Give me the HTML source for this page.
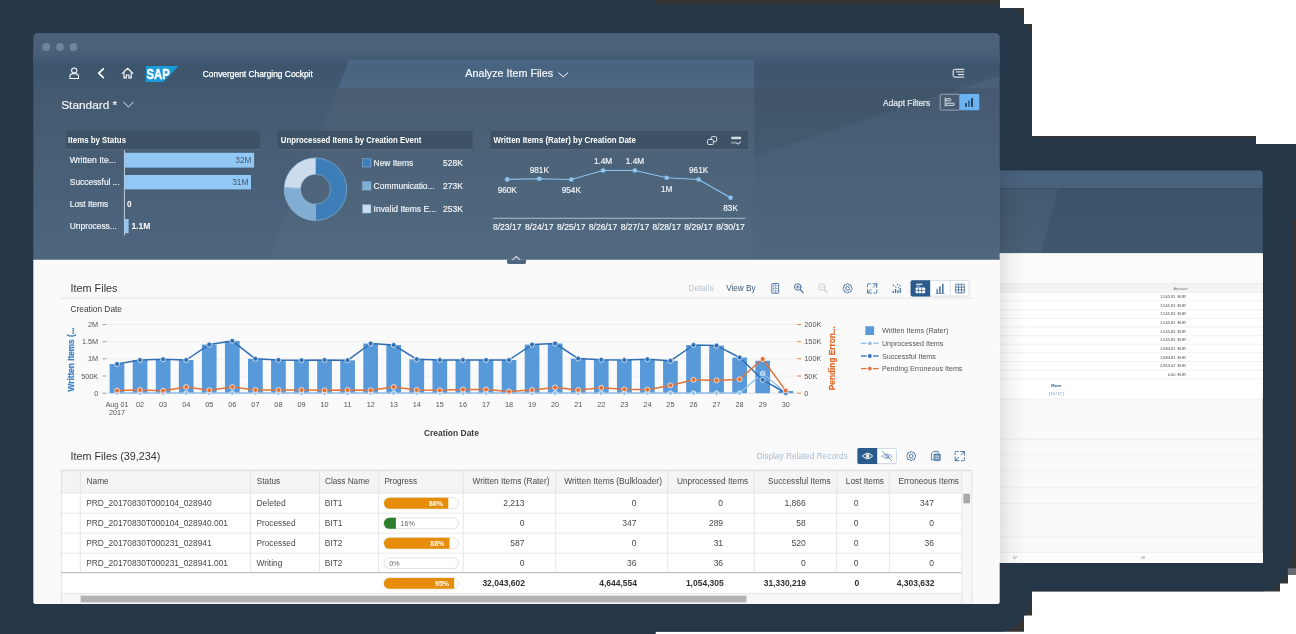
<!DOCTYPE html>
<html><head><meta charset="utf-8"><title>Analyze Item Files</title>
<style>html,body{margin:0;padding:0;background:#fff;}body{width:1296px;height:634px;overflow:hidden;position:relative;}svg{display:block;position:absolute;left:-8px;top:-8px;font-family:"Liberation Sans", sans-serif;filter:blur(0.35px);}text{white-space:pre;}</style>
</head><body>
<svg width="1312" height="650" viewBox="-8 -8 1312 650" font-family='"Liberation Sans", sans-serif'>
<defs>
<clipPath id="mask"><polygon points="-10,-10 1000,-10 1000,8 1024,8 1024,24 1032,24 1032,136 1256,136 1256,144 1310,144 1310,575 1288,575 1288,583.5 1280,583.5 1280,591.5 1032,591.5 1032,615.5 1024,615.5 1024,631.8 655.5,631.8 655.5,650 -10,650"/></clipPath>
<clipPath id="win1"><path d="M37.8 33 H995.2 A4.5 4.5 0 0 1 999.7 37.5 V601.9 A2 2 0 0 1 997.7 603.9 H35.3 A2 2 0 0 1 33.3 601.9 V37.5 A4.5 4.5 0 0 1 37.8 33 Z"/></clipPath>
<clipPath id="win2"><path d="M990 170.6 H1259.3 A3.5 3.5 0 0 1 1262.8 174.1 V562.9 H990 Z"/></clipPath>
<linearGradient id="gfilter" x1="0" y1="0" x2="0" y2="1"><stop offset="0" stop-color="#43596f"/><stop offset="1" stop-color="#4d667e"/></linearGradient>
<linearGradient id="gshell" x1="0" y1="0" x2="0" y2="1"><stop offset="0" stop-color="#3c556d"/><stop offset="1" stop-color="#405971"/></linearGradient>
<linearGradient id="gw2" x1="0" y1="0" x2="0" y2="1"><stop offset="0" stop-color="#3b5269"/><stop offset="1" stop-color="#40586f"/></linearGradient>
<linearGradient id="gtopgray" x1="0" y1="0" x2="0" y2="1"><stop offset="0" stop-color="#343434"/><stop offset="0.6" stop-color="#343434"/><stop offset="1" stop-color="#243648"/></linearGradient>
<linearGradient id="gtitlefade" x1="0" y1="0" x2="0" y2="1"><stop offset="0" stop-color="#4b617a"/><stop offset="1" stop-color="#3d566e"/></linearGradient>
<linearGradient id="gfade" x1="0" y1="0" x2="1" y2="0"><stop offset="0" stop-color="#000" stop-opacity="0.10"/><stop offset="0.4" stop-color="#000" stop-opacity="0.04"/><stop offset="1" stop-color="#000" stop-opacity="0"/></linearGradient>
</defs>
<rect x="-10.00" y="-10.00" width="1330.00" height="670.00" fill="#ffffff" />
<g clip-path="url(#mask)">
<rect x="-10.00" y="-10.00" width="1330.00" height="670.00" fill="#343434" />
<rect x="-10.00" y="-10.00" width="666.00" height="670.00" fill="#243648" />
<rect x="-60" y="4.5" width="1092" height="627.2" rx="32" ry="41.5" fill="#243648"/>
<path d="M990 138 H1320 V219 H1292.6 V550 A31 41.5 0 0 1 1261.6 591.5 H990 Z" fill="#243648"/>
<rect x="1287.80" y="568.20" width="30.00" height="7.00" fill="#666a72" />
</g>
<g clip-path="url(#win2)">
<rect x="990.00" y="170.00" width="280.00" height="18.40" fill="#49627b" />
<rect x="990.00" y="188.40" width="280.00" height="64.90" fill="url(#gw2)" />
<polygon points="990,188.4 1058.5,188.4 1040.8,253.3 990,253.3" fill="#ffffff" opacity="0.045"/>
<rect x="990.00" y="253.30" width="280.00" height="320.00" fill="#fafafa" />
<rect x="990.00" y="253.30" width="280.00" height="30.30" fill="#fbfbfb" />
<rect x="990.00" y="283.60" width="280.00" height="9.10" fill="#f4f4f4" />
<line x1="990.00" y1="283.60" x2="1270.00" y2="283.60" stroke="#e4e4e4" stroke-width="0.6" />
<line x1="990.00" y1="292.70" x2="1270.00" y2="292.70" stroke="#e4e4e4" stroke-width="0.6" />
<rect x="990.00" y="292.70" width="280.00" height="106.00" fill="#ffffff" />
<text x="1180.5" y="289.70" font-size="4.2" fill="#777" font-weight="normal" text-anchor="middle" >Amount</text>
<text x="1175.5" y="298.23" font-size="4.0" fill="#444" font-weight="normal" text-anchor="end" >1,545.81</text>
<text x="1177.5" y="298.23" font-size="4.0" fill="#444" font-weight="normal" text-anchor="start" >EUR</text>
<line x1="990.00" y1="301.10" x2="1270.00" y2="301.10" stroke="#e9e9e9" stroke-width="0.6" />
<text x="1175.5" y="306.86" font-size="4.0" fill="#444" font-weight="normal" text-anchor="end" >1,545.81</text>
<text x="1177.5" y="306.86" font-size="4.0" fill="#444" font-weight="normal" text-anchor="start" >EUR</text>
<line x1="990.00" y1="309.73" x2="1270.00" y2="309.73" stroke="#e9e9e9" stroke-width="0.6" />
<text x="1175.5" y="315.49" font-size="4.0" fill="#444" font-weight="normal" text-anchor="end" >1,545.81</text>
<text x="1177.5" y="315.49" font-size="4.0" fill="#444" font-weight="normal" text-anchor="start" >EUR</text>
<line x1="990.00" y1="318.36" x2="1270.00" y2="318.36" stroke="#e9e9e9" stroke-width="0.6" />
<text x="1175.5" y="324.12" font-size="4.0" fill="#444" font-weight="normal" text-anchor="end" >1,545.81</text>
<text x="1177.5" y="324.12" font-size="4.0" fill="#444" font-weight="normal" text-anchor="start" >EUR</text>
<line x1="990.00" y1="326.99" x2="1270.00" y2="326.99" stroke="#e9e9e9" stroke-width="0.6" />
<text x="1175.5" y="332.75" font-size="4.0" fill="#444" font-weight="normal" text-anchor="end" >1,545.81</text>
<text x="1177.5" y="332.75" font-size="4.0" fill="#444" font-weight="normal" text-anchor="start" >EUR</text>
<line x1="990.00" y1="335.62" x2="1270.00" y2="335.62" stroke="#e9e9e9" stroke-width="0.6" />
<text x="1175.5" y="341.38" font-size="4.0" fill="#444" font-weight="normal" text-anchor="end" >1,545.81</text>
<text x="1177.5" y="341.38" font-size="4.0" fill="#444" font-weight="normal" text-anchor="start" >EUR</text>
<line x1="990.00" y1="344.25" x2="1270.00" y2="344.25" stroke="#e9e9e9" stroke-width="0.6" />
<text x="1175.5" y="350.01" font-size="4.0" fill="#444" font-weight="normal" text-anchor="end" >1,684.81</text>
<text x="1177.5" y="350.01" font-size="4.0" fill="#444" font-weight="normal" text-anchor="start" >EUR</text>
<line x1="990.00" y1="352.88" x2="1270.00" y2="352.88" stroke="#e9e9e9" stroke-width="0.6" />
<text x="1175.5" y="358.64" font-size="4.0" fill="#444" font-weight="normal" text-anchor="end" >1,684.81</text>
<text x="1177.5" y="358.64" font-size="4.0" fill="#444" font-weight="normal" text-anchor="start" >EUR</text>
<line x1="990.00" y1="361.51" x2="1270.00" y2="361.51" stroke="#e9e9e9" stroke-width="0.6" />
<text x="1175.5" y="367.27" font-size="4.0" fill="#444" font-weight="normal" text-anchor="end" >2,853.62</text>
<text x="1177.5" y="367.27" font-size="4.0" fill="#444" font-weight="normal" text-anchor="start" >EUR</text>
<line x1="990.00" y1="370.14" x2="1270.00" y2="370.14" stroke="#e9e9e9" stroke-width="0.6" />
<text x="1175.5" y="375.90" font-size="4.0" fill="#444" font-weight="normal" text-anchor="end" >0.00</text>
<text x="1177.5" y="375.90" font-size="4.0" fill="#444" font-weight="normal" text-anchor="start" >EUR</text>
<line x1="990.00" y1="378.77" x2="1270.00" y2="378.77" stroke="#e9e9e9" stroke-width="0.6" />
<text x="1056.3" y="386.78" font-size="4.4" fill="#2f5f8f" font-weight="bold" text-anchor="middle" >More</text>
<text x="1056.3" y="394.69" font-size="3.6" fill="#5b84ad" font-weight="normal" text-anchor="middle" >[ 10 / 17 ]</text>
<line x1="990.00" y1="398.90" x2="1270.00" y2="398.90" stroke="#efefef" stroke-width="0.7" />
<line x1="990.00" y1="439.10" x2="1270.00" y2="439.10" stroke="#eaeaea" stroke-width="0.8" />
<line x1="990.00" y1="454.70" x2="1270.00" y2="454.70" stroke="#eeeeee" stroke-width="0.8" />
<line x1="990.00" y1="470.60" x2="1270.00" y2="470.60" stroke="#ececec" stroke-width="0.8" />
<line x1="990.00" y1="487.40" x2="1270.00" y2="487.40" stroke="#f0f0f0" stroke-width="0.8" />
<line x1="990.00" y1="503.50" x2="1270.00" y2="503.50" stroke="#f0f0f0" stroke-width="0.8" />
<line x1="990.00" y1="520.00" x2="1270.00" y2="520.00" stroke="#f3f3f3" stroke-width="0.8" />
<line x1="990.00" y1="536.70" x2="1270.00" y2="536.70" stroke="#f0f0f0" stroke-width="0.8" />
<line x1="990.00" y1="552.40" x2="1270.00" y2="552.40" stroke="#e8e8e8" stroke-width="0.8" />
<rect x="990.00" y="552.80" width="280.00" height="12.00" fill="#fdfdfd" />
<text x="1015.0" y="559.15" font-size="3.2" fill="#777" font-weight="normal" text-anchor="middle" >07</text>
<text x="1143.0" y="559.15" font-size="3.2" fill="#777" font-weight="normal" text-anchor="middle" >08</text>
<rect x="999.70" y="170.00" width="27.00" height="400.00" fill="url(#gfade)" />
</g>
<g clip-path="url(#win1)">
<rect x="33.00" y="33.00" width="968.00" height="30.00" fill="#4b617a" />
<rect x="33.00" y="60.00" width="968.00" height="28.00" fill="url(#gshell)" />
<rect x="33.00" y="88.00" width="968.00" height="172.00" fill="url(#gfilter)" />
<rect x="33.00" y="51.00" width="968.00" height="14.00" fill="url(#gtitlefade)" />
<polygon points="349,60 753.8,60 753.8,88 338,88" fill="#8fc0ee" opacity="0.14"/>
<polygon points="338,88 753.8,88 753.8,260 268,260" fill="#ffffff" opacity="0.028"/>
<polygon points="753.8,156.2 1000,75.4 1000,260 753.8,260" fill="#ffffff" opacity="0.012"/>
<polygon points="961.7,88 1000,75.4 1000,88" fill="#ffffff" opacity="0.045"/>
<polygon points="753.8,88 961.7,88 753.8,156.2" fill="#000000" opacity="0.04"/>
<rect x="33.00" y="258.90" width="968.00" height="1.00" fill="#3e546b" opacity="0.6"/>
<rect x="33.00" y="259.70" width="968.00" height="345.00" fill="#fafafa" />
</g>
<circle cx="46.3" cy="46.9" r="3.9" fill="#6f859d"/>
<circle cx="60.0" cy="46.9" r="3.9" fill="#6f859d"/>
<circle cx="73.4" cy="46.9" r="3.9" fill="#6f859d"/>
<g fill="none" stroke="#ffffff" stroke-width="1.05" stroke-linejoin="round"><circle cx="74.2" cy="70.5" r="2.6"/><path d="M69.9 78.5 V76.6 A2.8 2.8 0 0 1 72.7 73.8 H75.7 A2.8 2.8 0 0 1 78.5 76.6 V78.5 Z"/></g>
<path d="M103.4 68.8 L98.7 73.2 L103.4 77.6" fill="none" stroke="#ffffff" stroke-width="1.7" stroke-linecap="round" stroke-linejoin="round"/>
<g fill="none" stroke="#ffffff" stroke-width="1.1" stroke-linejoin="round" stroke-linecap="round"><path d="M122.3 73.3 L127.6 68.4 L132.9 73.3"/><path d="M124 72.6 V77.9 H126.3 V75 H128.9 V77.9 H131.2 V72.6"/><path d="M124.3 71.3 L127.6 68.3 L130.9 71.3" stroke-width="0.9"/></g>
<polygon points="145.9,65.9 178.6,65.9 163.2,81.9 145.9,81.9" fill="#1b9ad8"/>
<text x="146.5" y="79.43" font-size="14.6" fill="#ffffff" font-weight="bold" text-anchor="start" textLength="23.2" lengthAdjust="spacingAndGlyphs" stroke="#fff" stroke-width="0.45">SAP</text>
<text x="202.8" y="76.64" font-size="8.2" fill="#ffffff" font-weight="normal" text-anchor="start" textLength="110.0" lengthAdjust="spacingAndGlyphs" stroke="#fff" stroke-width="0.25">Convergent Charging Cockpit</text>
<text x="465.3" y="76.72" font-size="10.4" fill="#f4f7fa" font-weight="normal" text-anchor="start" textLength="87.8" lengthAdjust="spacingAndGlyphs" stroke="#f4f7fa" stroke-width="0.2">Analyze Item Files</text>
<path d="M558.8 72.9 L563.3 76.8 L567.8 72.9" fill="none" stroke="#ffffff" stroke-width="1.0" stroke-linecap="round" stroke-linejoin="round"/>
<g fill="none" stroke="#ffffff" stroke-width="1.0" stroke-linecap="round"><path d="M963.8 69.3 H954.8 A1.6 1.6 0 0 0 953.2 70.9 V75.5 A1.6 1.6 0 0 0 954.8 77.1 H963.8"/><path d="M956.4 71.9 H963.8 M958.4 74.5 H963.8" stroke-width="0.9"/></g>
<text x="61.2" y="108.61" font-size="11.2" fill="#eef2f6" font-weight="normal" text-anchor="start" textLength="56.0" lengthAdjust="spacingAndGlyphs" stroke="#eef2f6" stroke-width="0.2">Standard *</text>
<path d="M123.6 102.3 L128.4 106.9 L133.2 102.3" fill="none" stroke="#e3e9ef" stroke-width="1.0" stroke-linecap="round" stroke-linejoin="round"/>
<text x="883.1" y="105.67" font-size="8.3" fill="#e6ebf1" font-weight="normal" text-anchor="start" textLength="47.0" lengthAdjust="spacingAndGlyphs" stroke="#e6ebf1" stroke-width="0.2">Adapt Filters</text>
<rect x="940.20" y="94.30" width="19.60" height="15.80" fill="none" rx="1.2" stroke="#b7c6d6" stroke-width="0.7"/>
<rect x="959.80" y="94.00" width="19.50" height="16.30" fill="#6cb4f1" rx="1.2" />
<g fill="none" stroke="#e8eef4" stroke-width="0.9"><rect x="946.2" y="98.7" width="4.5" height="2.2" rx="0.5"/><rect x="946.2" y="103.2" width="8" height="2.2" rx="0.5"/><path d="M945.2 97.6 V106.6"/></g>
<g fill="#23405c"><rect x="965.1" y="103.1" width="1.7" height="3.8"/><rect x="968.1" y="100.7" width="1.7" height="6.2" opacity="0.75"/><rect x="971.1" y="98.1" width="1.9" height="8.8"/></g>
<rect x="66.20" y="130.80" width="193.80" height="18.40" fill="#3e5266" />
<line x1="66.20" y1="149.60" x2="260.00" y2="149.60" stroke="#5a7089" stroke-width="0.7" />
<text x="68.0" y="143.34" font-size="8.5" fill="#ffffff" font-weight="bold" text-anchor="start" textLength="58.0" lengthAdjust="spacingAndGlyphs" >Items by Status</text>
<line x1="124.40" y1="150.00" x2="124.40" y2="235.50" stroke="#cfd9e3" stroke-width="0.9" />
<rect x="124.70" y="152.80" width="129.40" height="14.80" fill="#91c8f6" />
<text x="251.5" y="163.37" font-size="8.3" fill="#45566b" font-weight="normal" text-anchor="end" >32M</text>
<rect x="124.70" y="175.00" width="126.30" height="14.40" fill="#91c8f6" />
<text x="248.4" y="185.37" font-size="8.3" fill="#45566b" font-weight="normal" text-anchor="end" >31M</text>
<rect x="124.70" y="219.00" width="3.90" height="14.20" fill="#91c8f6" />
<text x="69.8" y="163.34" font-size="8.2" fill="#f2f5f8" font-weight="normal" text-anchor="start" textLength="46.0" lengthAdjust="spacingAndGlyphs"  stroke="#f2f5f8" stroke-width="0.18">Written Ite...</text>
<text x="69.8" y="185.14" font-size="8.2" fill="#f2f5f8" font-weight="normal" text-anchor="start" textLength="50.0" lengthAdjust="spacingAndGlyphs"  stroke="#f2f5f8" stroke-width="0.18">Successful ...</text>
<text x="69.8" y="207.04" font-size="8.2" fill="#f2f5f8" font-weight="normal" text-anchor="start" textLength="38.5" lengthAdjust="spacingAndGlyphs"  stroke="#f2f5f8" stroke-width="0.18">Lost Items</text>
<text x="69.8" y="229.04" font-size="8.2" fill="#f2f5f8" font-weight="normal" text-anchor="start" textLength="47.0" lengthAdjust="spacingAndGlyphs"  stroke="#f2f5f8" stroke-width="0.18">Unprocess...</text>
<text x="127.0" y="207.04" font-size="8.2" fill="#ffffff" font-weight="bold" text-anchor="start" >0</text>
<text x="131.4" y="229.04" font-size="8.2" fill="#ffffff" font-weight="bold" text-anchor="start" textLength="18.8" lengthAdjust="spacingAndGlyphs" >1.1M</text>
<rect x="277.80" y="130.80" width="194.90" height="18.40" fill="#3e5266" />
<line x1="277.80" y1="149.60" x2="472.70" y2="149.60" stroke="#5a7089" stroke-width="0.7" />
<text x="280.8" y="143.34" font-size="8.5" fill="#ffffff" font-weight="bold" text-anchor="start" textLength="140.5" lengthAdjust="spacingAndGlyphs" >Unprocessed Items by Creation Event</text>
<path d="M315.50 157.90 A31.3 31.3 0 1 1 315.34 220.50 L315.42 204.20 A15.0 15.0 0 1 0 315.50 174.20 Z" fill="#3d7eb8" stroke="#9cc4e6" stroke-width="0.5"/>
<path d="M315.34 220.50 A31.3 31.3 0 0 1 284.26 187.29 L300.53 188.28 A15.0 15.0 0 0 0 315.42 204.20 Z" fill="#82add3" stroke="#9cc4e6" stroke-width="0.5"/>
<path d="M284.26 187.29 A31.3 31.3 0 0 1 315.50 157.90 L315.50 174.20 A15.0 15.0 0 0 0 300.53 188.28 Z" fill="#cddcec" stroke="#9cc4e6" stroke-width="0.5"/>
<rect x="362.70" y="158.80" width="8.20" height="8.20" fill="#3d7eb8" stroke="#8fc0ee" stroke-width="0.5"/>
<text x="373.6" y="166.04" font-size="8.2" fill="#f2f5f8" font-weight="normal" text-anchor="start" textLength="39.5" lengthAdjust="spacingAndGlyphs"  stroke="#f2f5f8" stroke-width="0.18">New Items</text>
<text x="443.0" y="166.04" font-size="8.2" fill="#f2f5f8" font-weight="normal" text-anchor="start" textLength="19.8" lengthAdjust="spacingAndGlyphs"  stroke="#f2f5f8" stroke-width="0.18">528K</text>
<rect x="362.70" y="181.80" width="8.20" height="8.20" fill="#82add3" stroke="#8fc0ee" stroke-width="0.5"/>
<text x="373.6" y="189.04" font-size="8.2" fill="#f2f5f8" font-weight="normal" text-anchor="start" textLength="61.0" lengthAdjust="spacingAndGlyphs"  stroke="#f2f5f8" stroke-width="0.18">Communicatio...</text>
<text x="443.0" y="189.04" font-size="8.2" fill="#f2f5f8" font-weight="normal" text-anchor="start" textLength="19.8" lengthAdjust="spacingAndGlyphs"  stroke="#f2f5f8" stroke-width="0.18">273K</text>
<rect x="362.70" y="204.80" width="8.20" height="8.20" fill="#cddcec" stroke="#8fc0ee" stroke-width="0.5"/>
<text x="373.6" y="212.04" font-size="8.2" fill="#f2f5f8" font-weight="normal" text-anchor="start" textLength="62.5" lengthAdjust="spacingAndGlyphs"  stroke="#f2f5f8" stroke-width="0.18">Invalid Items E...</text>
<text x="443.0" y="212.04" font-size="8.2" fill="#f2f5f8" font-weight="normal" text-anchor="start" textLength="19.8" lengthAdjust="spacingAndGlyphs"  stroke="#f2f5f8" stroke-width="0.18">253K</text>
<rect x="490.80" y="130.80" width="257.10" height="18.40" fill="#3e5266" />
<line x1="490.80" y1="149.60" x2="747.90" y2="149.60" stroke="#5a7089" stroke-width="0.7" />
<text x="493.4" y="143.34" font-size="8.5" fill="#ffffff" font-weight="bold" text-anchor="start" textLength="142.5" lengthAdjust="spacingAndGlyphs" >Written Items (Rater) by Creation Date</text>
<g fill="none" stroke="#d9e1e9" stroke-width="1.0"><rect x="707.5" y="139.5" width="5.9" height="5.0" rx="1"/><path d="M711.2 139.2 V137.6 A1 1 0 0 1 712.2 136.6 H715.6 A1 1 0 0 1 716.6 137.6 V140.6 A1 1 0 0 1 715.6 141.6 H713.8"/></g>
<g fill="#d3dbe3"><rect x="731.3" y="136.7" width="9.8" height="2.5"/><rect x="731.3" y="141.8" width="5.0" height="1.8" opacity="0.5"/><path d="M736.6 142.3 L738.3 143.4 L740.4 141.2 L741.2 141.9 L738.4 144.8 L736.0 143.2 Z"/></g>
<polyline points="507.2,179.4 539.3,178.8 571.3,179.5 603.1,170.5 634.9,170.5 666.7,177.7 698.6,179.5 730.6,197.8" fill="none" stroke="#8dc3f2" stroke-width="1.1" stroke-linejoin="round"/>
<circle cx="507.2" cy="179.4" r="2.3" fill="#8dc3f2"/>
<circle cx="539.3" cy="178.8" r="2.3" fill="#8dc3f2"/>
<circle cx="571.3" cy="179.5" r="2.3" fill="#8dc3f2"/>
<circle cx="603.1" cy="170.5" r="2.3" fill="#8dc3f2"/>
<circle cx="634.9" cy="170.5" r="2.3" fill="#8dc3f2"/>
<circle cx="666.7" cy="177.7" r="2.3" fill="#8dc3f2"/>
<circle cx="698.6" cy="179.5" r="2.3" fill="#8dc3f2"/>
<circle cx="730.6" cy="197.8" r="2.3" fill="#8dc3f2"/>
<text x="507.2" y="192.84" font-size="8.2" fill="#f2f5f8" font-weight="normal" text-anchor="middle"  stroke="#f2f5f8" stroke-width="0.18">960K</text>
<text x="539.3" y="172.64" font-size="8.2" fill="#f2f5f8" font-weight="normal" text-anchor="middle"  stroke="#f2f5f8" stroke-width="0.18">981K</text>
<text x="571.3" y="192.84" font-size="8.2" fill="#f2f5f8" font-weight="normal" text-anchor="middle"  stroke="#f2f5f8" stroke-width="0.18">954K</text>
<text x="603.1" y="164.14" font-size="8.2" fill="#f2f5f8" font-weight="normal" text-anchor="middle"  stroke="#f2f5f8" stroke-width="0.18">1.4M</text>
<text x="634.9" y="164.14" font-size="8.2" fill="#f2f5f8" font-weight="normal" text-anchor="middle"  stroke="#f2f5f8" stroke-width="0.18">1.4M</text>
<text x="666.7" y="192.14" font-size="8.2" fill="#f2f5f8" font-weight="normal" text-anchor="middle"  stroke="#f2f5f8" stroke-width="0.18">1M</text>
<text x="698.6" y="172.64" font-size="8.2" fill="#f2f5f8" font-weight="normal" text-anchor="middle"  stroke="#f2f5f8" stroke-width="0.18">961K</text>
<text x="730.6" y="210.94" font-size="8.2" fill="#f2f5f8" font-weight="normal" text-anchor="middle"  stroke="#f2f5f8" stroke-width="0.18">83K</text>
<line x1="493.00" y1="218.30" x2="745.20" y2="218.30" stroke="#b9c6d3" stroke-width="0.9" />
<text x="507.2" y="230.14" font-size="8.2" fill="#f2f5f8" font-weight="normal" text-anchor="middle" textLength="28.5" lengthAdjust="spacingAndGlyphs"  stroke="#f2f5f8" stroke-width="0.18">8/23/17</text>
<text x="539.3" y="230.14" font-size="8.2" fill="#f2f5f8" font-weight="normal" text-anchor="middle" textLength="28.5" lengthAdjust="spacingAndGlyphs"  stroke="#f2f5f8" stroke-width="0.18">8/24/17</text>
<text x="571.3" y="230.14" font-size="8.2" fill="#f2f5f8" font-weight="normal" text-anchor="middle" textLength="28.5" lengthAdjust="spacingAndGlyphs"  stroke="#f2f5f8" stroke-width="0.18">8/25/17</text>
<text x="603.1" y="230.14" font-size="8.2" fill="#f2f5f8" font-weight="normal" text-anchor="middle" textLength="28.5" lengthAdjust="spacingAndGlyphs"  stroke="#f2f5f8" stroke-width="0.18">8/26/17</text>
<text x="634.9" y="230.14" font-size="8.2" fill="#f2f5f8" font-weight="normal" text-anchor="middle" textLength="28.5" lengthAdjust="spacingAndGlyphs"  stroke="#f2f5f8" stroke-width="0.18">8/27/17</text>
<text x="666.7" y="230.14" font-size="8.2" fill="#f2f5f8" font-weight="normal" text-anchor="middle" textLength="28.5" lengthAdjust="spacingAndGlyphs"  stroke="#f2f5f8" stroke-width="0.18">8/28/17</text>
<text x="698.6" y="230.14" font-size="8.2" fill="#f2f5f8" font-weight="normal" text-anchor="middle" textLength="28.5" lengthAdjust="spacingAndGlyphs"  stroke="#f2f5f8" stroke-width="0.18">8/29/17</text>
<text x="730.6" y="230.14" font-size="8.2" fill="#f2f5f8" font-weight="normal" text-anchor="middle" textLength="28.5" lengthAdjust="spacingAndGlyphs"  stroke="#f2f5f8" stroke-width="0.18">8/30/17</text>
<path d="M507 259.6 H526 V262.2 A1.7 1.7 0 0 1 524.3 263.9 H508.7 A1.7 1.7 0 0 1 507 262.2 Z" fill="#4d657e"/>
<path d="M512.7 259.7 L516.3 256.4 L519.9 259.7" fill="none" stroke="#c3d0dd" stroke-width="1.2" stroke-linecap="round" stroke-linejoin="round"/>
<text x="70.5" y="292.08" font-size="11.4" fill="#333" font-weight="normal" text-anchor="start" textLength="47.0" lengthAdjust="spacingAndGlyphs" >Item Files</text>
<line x1="61.20" y1="298.10" x2="972.00" y2="298.10" stroke="#e2e2e2" stroke-width="1.0" />
<text x="688.5" y="291.48" font-size="8.6" fill="#b6c3d0" font-weight="normal" text-anchor="start" textLength="25.0" lengthAdjust="spacingAndGlyphs" >Details</text>
<text x="726.2" y="291.48" font-size="8.6" fill="#3f5877" font-weight="normal" text-anchor="start" textLength="29.4" lengthAdjust="spacingAndGlyphs" >View By</text>
<g fill="none" stroke="#3d6a9c" stroke-width="0.9"><rect x="771.8" y="283.6" width="6.9" height="9.6" rx="0.6"/><path d="M775.2 283.6 V293.2" stroke-width="0.6"/><path d="M773 286 H774.2 M773 288.4 H774.2 M773 290.8 H774.2 M776.2 286 H777.4 M776.2 288.4 H777.4 M776.2 290.8 H777.4" stroke-width="0.8"/></g>
<g fill="none" stroke="#3d6a9c" stroke-width="0.9" stroke-linecap="round"><circle cx="797.7" cy="287.0" r="3.3"/><path d="M800.2 289.6 L803.1 292.6" stroke-width="1.3"/><path d="M796.0 287.0 H799.4 M797.7 285.3 V288.7" stroke-width="0.8"/></g>
<g fill="none" stroke="#c3ccd6" stroke-width="0.9" stroke-linecap="round"><circle cx="821.9" cy="287.0" r="3.3"/><path d="M824.4 289.6 L827.3 292.6" stroke-width="1.3"/><path d="M820.2 287.0 H823.6" stroke-width="0.8"/></g>
<g fill="none" stroke="#3d6a9c" stroke-width="0.9" stroke-linejoin="round"><path d="M852.30 288.40 L851.20 289.89 L850.92 291.72 L849.09 292.00 L847.60 293.10 L846.11 292.00 L844.28 291.72 L844.00 289.89 L842.90 288.40 L844.00 286.91 L844.28 285.08 L846.11 284.80 L847.60 283.70 L849.09 284.80 L850.92 285.08 L851.20 286.91 Z"/><circle cx="847.6" cy="288.4" r="1.9"/></g>
<g fill="none" stroke="#3d6a9c" stroke-width="0.9" stroke-linecap="round" stroke-linejoin="round"><path d="M873.0 283.79999999999995 H876.8000000000001 V287.59999999999997 M876.8000000000001 283.79999999999995 L873.4000000000001 287.2"/><path d="M871.4000000000001 293.0 H867.6 V289.2 M867.6 293.0 L871.0 289.59999999999997"/><path d="M867.6 286.79999999999995 V283.79999999999995 H870.6" stroke-dasharray="1.4 1.1"/><path d="M876.8000000000001 290.0 V293.0 H873.8000000000001" stroke-dasharray="1.4 1.1"/></g>
<g fill="#3d6a9c"><rect x="892.6" y="290.6" width="1.2" height="2.4"/><rect x="895" y="289" width="1.2" height="4"/><rect x="897.4" y="290.2" width="1.2" height="2.8"/><rect x="899.6" y="288" width="1.2" height="5"/><circle cx="893.4" cy="285.4" r="0.7"/><circle cx="895.8" cy="287" r="0.7"/><circle cx="897.6" cy="284.4" r="0.7"/><circle cx="900" cy="285.8" r="0.7"/><circle cx="898.6" cy="287.6" r="0.6"/></g>
<rect x="910.80" y="280.50" width="58.40" height="15.60" fill="#ffffff" rx="1.5" stroke="#c9d3dd" stroke-width="0.7"/>
<path d="M912.3 280.2 H930.2 V296.4 H912.3 A1.7 1.7 0 0 1 910.6 294.7 V281.9 A1.7 1.7 0 0 1 912.3 280.2 Z" fill="#2b5a8c"/>
<line x1="950.30" y1="280.50" x2="950.30" y2="296.10" stroke="#c9d3dd" stroke-width="0.7" />
<g fill="#ffffff"><rect x="916.2" y="283.6" width="6.2" height="1.4" opacity="0.8"/><rect x="916.2" y="285.6" width="4" height="1.0" opacity="0.6"/><rect x="915.6" y="287.6" width="9.6" height="5.6" rx="1"/></g>
<g stroke="#2b5a8c" stroke-width="0.7"><path d="M915.6 290.4 H925.2 M918.4 287.6 V293.2 M921.6 287.6 V293.2"/></g>
<g fill="#3d6a9c"><rect x="936.4" y="288.8" width="1.5" height="4.2" opacity="0.8"/><rect x="939.2" y="286.4" width="1.5" height="6.6"/><rect x="942" y="283.8" width="1.6" height="9.2" opacity="0.9"/><rect x="935.6" y="293" width="9" height="0.7"/></g>
<g fill="none" stroke="#3d6a9c" stroke-width="0.8"><rect x="955.6" y="284.2" width="8.8" height="8.6" rx="0.6"/><path d="M958.5 284.2 V292.8 M961.5 284.2 V292.8 M955.6 287.1 H964.4 M955.6 289.9 H964.4"/></g>
<text x="70.5" y="312.01" font-size="8.4" fill="#3b3b3b" font-weight="normal" text-anchor="start" textLength="51.5" lengthAdjust="spacingAndGlyphs" >Creation Date</text>
<line x1="106.50" y1="324.50" x2="797.00" y2="324.50" stroke="#ececec" stroke-width="0.8" />
<line x1="106.50" y1="341.70" x2="797.00" y2="341.70" stroke="#ececec" stroke-width="0.8" />
<line x1="106.50" y1="358.80" x2="797.00" y2="358.80" stroke="#ececec" stroke-width="0.8" />
<line x1="106.50" y1="376.00" x2="797.00" y2="376.00" stroke="#ececec" stroke-width="0.8" />
<line x1="106.50" y1="393.20" x2="797.00" y2="393.20" stroke="#dcdcdc" stroke-width="0.8" />
<text x="98.2" y="327.11" font-size="7.3" fill="#555" font-weight="normal" text-anchor="end" >2M</text>
<line x1="102.60" y1="324.50" x2="106.20" y2="324.50" stroke="#7a7a7a" stroke-width="0.7" />
<text x="98.2" y="344.31" font-size="7.3" fill="#555" font-weight="normal" text-anchor="end" >1.5M</text>
<line x1="102.60" y1="341.70" x2="106.20" y2="341.70" stroke="#7a7a7a" stroke-width="0.7" />
<text x="98.2" y="361.41" font-size="7.3" fill="#555" font-weight="normal" text-anchor="end" >1M</text>
<line x1="102.60" y1="358.80" x2="106.20" y2="358.80" stroke="#7a7a7a" stroke-width="0.7" />
<text x="98.2" y="378.61" font-size="7.3" fill="#555" font-weight="normal" text-anchor="end" >500K</text>
<line x1="102.60" y1="376.00" x2="106.20" y2="376.00" stroke="#7a7a7a" stroke-width="0.7" />
<text x="98.2" y="395.81" font-size="7.3" fill="#555" font-weight="normal" text-anchor="end" >0</text>
<line x1="102.60" y1="393.20" x2="106.20" y2="393.20" stroke="#7a7a7a" stroke-width="0.7" />
<text x="804.3" y="327.11" font-size="7.3" fill="#555" font-weight="normal" text-anchor="start" >200K</text>
<line x1="797.20" y1="324.50" x2="801.20" y2="324.50" stroke="#e0733a" stroke-width="0.9" />
<text x="804.3" y="344.31" font-size="7.3" fill="#555" font-weight="normal" text-anchor="start" >150K</text>
<line x1="797.20" y1="341.70" x2="801.20" y2="341.70" stroke="#e0733a" stroke-width="0.9" />
<text x="804.3" y="361.41" font-size="7.3" fill="#555" font-weight="normal" text-anchor="start" >100K</text>
<line x1="797.20" y1="358.80" x2="801.20" y2="358.80" stroke="#e0733a" stroke-width="0.9" />
<text x="804.3" y="378.61" font-size="7.3" fill="#555" font-weight="normal" text-anchor="start" >50K</text>
<line x1="797.20" y1="376.00" x2="801.20" y2="376.00" stroke="#e0733a" stroke-width="0.9" />
<text x="804.3" y="395.81" font-size="7.3" fill="#555" font-weight="normal" text-anchor="start" >0</text>
<line x1="797.20" y1="393.20" x2="801.20" y2="393.20" stroke="#e0733a" stroke-width="0.9" />
<text transform="translate(74.4 359.4) rotate(-90)" text-anchor="middle" font-size="8.6" font-weight="bold" fill="#3b7fc4" stroke="#3b7fc4" stroke-width="0.25" textLength="64" lengthAdjust="spacingAndGlyphs">Written Items (...</text>
<text transform="translate(835.2 358.2) rotate(-90)" text-anchor="middle" font-size="8.6" font-weight="bold" fill="#e0692a" stroke="#e0692a" stroke-width="0.2" textLength="64" lengthAdjust="spacingAndGlyphs">Pending Erron...</text>
<rect x="109.65" y="364.00" width="14.70" height="29.20" fill="#5899da" />
<rect x="132.71" y="360.00" width="14.70" height="33.20" fill="#5899da" />
<rect x="155.77" y="359.30" width="14.70" height="33.90" fill="#5899da" />
<rect x="178.83" y="360.00" width="14.70" height="33.20" fill="#5899da" />
<rect x="201.89" y="344.60" width="14.70" height="48.60" fill="#5899da" />
<rect x="224.95" y="340.90" width="14.70" height="52.30" fill="#5899da" />
<rect x="248.01" y="358.80" width="14.70" height="34.40" fill="#5899da" />
<rect x="271.07" y="360.00" width="14.70" height="33.20" fill="#5899da" />
<rect x="294.13" y="360.30" width="14.70" height="32.90" fill="#5899da" />
<rect x="317.19" y="360.00" width="14.70" height="33.20" fill="#5899da" />
<rect x="340.25" y="360.30" width="14.70" height="32.90" fill="#5899da" />
<rect x="363.31" y="343.50" width="14.70" height="49.70" fill="#5899da" />
<rect x="386.37" y="345.00" width="14.70" height="48.20" fill="#5899da" />
<rect x="409.43" y="359.30" width="14.70" height="33.90" fill="#5899da" />
<rect x="432.49" y="360.00" width="14.70" height="33.20" fill="#5899da" />
<rect x="455.55" y="360.00" width="14.70" height="33.20" fill="#5899da" />
<rect x="478.61" y="360.00" width="14.70" height="33.20" fill="#5899da" />
<rect x="501.67" y="360.00" width="14.70" height="33.20" fill="#5899da" />
<rect x="524.73" y="344.60" width="14.70" height="48.60" fill="#5899da" />
<rect x="547.79" y="343.50" width="14.70" height="49.70" fill="#5899da" />
<rect x="570.85" y="358.60" width="14.70" height="34.60" fill="#5899da" />
<rect x="593.91" y="359.70" width="14.70" height="33.50" fill="#5899da" />
<rect x="616.97" y="360.00" width="14.70" height="33.20" fill="#5899da" />
<rect x="640.03" y="359.30" width="14.70" height="33.90" fill="#5899da" />
<rect x="663.09" y="360.80" width="14.70" height="32.40" fill="#5899da" />
<rect x="686.15" y="345.00" width="14.70" height="48.20" fill="#5899da" />
<rect x="709.21" y="345.60" width="14.70" height="47.60" fill="#5899da" />
<rect x="732.27" y="357.50" width="14.70" height="35.70" fill="#5899da" />
<rect x="755.33" y="360.80" width="14.70" height="32.40" fill="#5899da" />
<rect x="778.39" y="391.00" width="14.70" height="2.20" fill="#5899da" />
<polyline points="117.00,393.00 140.06,393.00 163.12,393.00 186.18,393.00 209.24,393.00 232.30,393.00 255.36,393.00 278.42,393.00 301.48,393.00 324.54,393.00 347.60,393.00 370.66,393.00 393.72,393.00 416.78,393.00 439.84,393.00 462.90,393.00 485.96,393.00 509.02,393.00 532.08,393.00 555.14,393.00 578.20,393.00 601.26,393.00 624.32,393.00 647.38,393.00 670.44,393.00 693.50,393.00 716.56,393.00 739.62,393.00 762.68,373.30 785.74,393.00" fill="none" stroke="#93bfeb" stroke-width="1.3" stroke-linejoin="round"/>
<circle cx="117.00" cy="393.00" r="2.2" fill="#93bfeb" stroke="#ffffff" stroke-width="0.7"/>
<circle cx="140.06" cy="393.00" r="2.2" fill="#93bfeb" stroke="#ffffff" stroke-width="0.7"/>
<circle cx="163.12" cy="393.00" r="2.2" fill="#93bfeb" stroke="#ffffff" stroke-width="0.7"/>
<circle cx="186.18" cy="393.00" r="2.2" fill="#93bfeb" stroke="#ffffff" stroke-width="0.7"/>
<circle cx="209.24" cy="393.00" r="2.2" fill="#93bfeb" stroke="#ffffff" stroke-width="0.7"/>
<circle cx="232.30" cy="393.00" r="2.2" fill="#93bfeb" stroke="#ffffff" stroke-width="0.7"/>
<circle cx="255.36" cy="393.00" r="2.2" fill="#93bfeb" stroke="#ffffff" stroke-width="0.7"/>
<circle cx="278.42" cy="393.00" r="2.2" fill="#93bfeb" stroke="#ffffff" stroke-width="0.7"/>
<circle cx="301.48" cy="393.00" r="2.2" fill="#93bfeb" stroke="#ffffff" stroke-width="0.7"/>
<circle cx="324.54" cy="393.00" r="2.2" fill="#93bfeb" stroke="#ffffff" stroke-width="0.7"/>
<circle cx="347.60" cy="393.00" r="2.2" fill="#93bfeb" stroke="#ffffff" stroke-width="0.7"/>
<circle cx="370.66" cy="393.00" r="2.2" fill="#93bfeb" stroke="#ffffff" stroke-width="0.7"/>
<circle cx="393.72" cy="393.00" r="2.2" fill="#93bfeb" stroke="#ffffff" stroke-width="0.7"/>
<circle cx="416.78" cy="393.00" r="2.2" fill="#93bfeb" stroke="#ffffff" stroke-width="0.7"/>
<circle cx="439.84" cy="393.00" r="2.2" fill="#93bfeb" stroke="#ffffff" stroke-width="0.7"/>
<circle cx="462.90" cy="393.00" r="2.2" fill="#93bfeb" stroke="#ffffff" stroke-width="0.7"/>
<circle cx="485.96" cy="393.00" r="2.2" fill="#93bfeb" stroke="#ffffff" stroke-width="0.7"/>
<circle cx="509.02" cy="393.00" r="2.2" fill="#93bfeb" stroke="#ffffff" stroke-width="0.7"/>
<circle cx="532.08" cy="393.00" r="2.2" fill="#93bfeb" stroke="#ffffff" stroke-width="0.7"/>
<circle cx="555.14" cy="393.00" r="2.2" fill="#93bfeb" stroke="#ffffff" stroke-width="0.7"/>
<circle cx="578.20" cy="393.00" r="2.2" fill="#93bfeb" stroke="#ffffff" stroke-width="0.7"/>
<circle cx="601.26" cy="393.00" r="2.2" fill="#93bfeb" stroke="#ffffff" stroke-width="0.7"/>
<circle cx="624.32" cy="393.00" r="2.2" fill="#93bfeb" stroke="#ffffff" stroke-width="0.7"/>
<circle cx="647.38" cy="393.00" r="2.2" fill="#93bfeb" stroke="#ffffff" stroke-width="0.7"/>
<circle cx="670.44" cy="393.00" r="2.2" fill="#93bfeb" stroke="#ffffff" stroke-width="0.7"/>
<circle cx="693.50" cy="393.00" r="2.2" fill="#93bfeb" stroke="#ffffff" stroke-width="0.7"/>
<circle cx="716.56" cy="393.00" r="2.2" fill="#93bfeb" stroke="#ffffff" stroke-width="0.7"/>
<circle cx="739.62" cy="393.00" r="2.2" fill="#93bfeb" stroke="#ffffff" stroke-width="0.7"/>
<circle cx="762.68" cy="373.30" r="2.2" fill="#93bfeb" stroke="#ffffff" stroke-width="0.7"/>
<circle cx="785.74" cy="393.00" r="2.2" fill="#93bfeb" stroke="#ffffff" stroke-width="0.7"/>
<polyline points="117.00,364.00 140.06,360.00 163.12,359.30 186.18,360.00 209.24,344.60 232.30,340.90 255.36,358.80 278.42,360.00 301.48,360.30 324.54,360.00 347.60,360.30 370.66,343.50 393.72,345.00 416.78,359.30 439.84,360.00 462.90,360.00 485.96,360.00 509.02,360.00 532.08,344.60 555.14,343.50 578.20,358.60 601.26,359.70 624.32,360.00 647.38,359.30 670.44,360.80 693.50,345.00 716.56,345.60 739.62,357.50 762.68,379.80 785.74,393.00" fill="none" stroke="#2f6fb4" stroke-width="1.5" stroke-linejoin="round"/>
<circle cx="117.00" cy="364.00" r="2.5" fill="#2f6fb4" stroke="#ffffff" stroke-width="0.7"/>
<circle cx="140.06" cy="360.00" r="2.5" fill="#2f6fb4" stroke="#ffffff" stroke-width="0.7"/>
<circle cx="163.12" cy="359.30" r="2.5" fill="#2f6fb4" stroke="#ffffff" stroke-width="0.7"/>
<circle cx="186.18" cy="360.00" r="2.5" fill="#2f6fb4" stroke="#ffffff" stroke-width="0.7"/>
<circle cx="209.24" cy="344.60" r="2.5" fill="#2f6fb4" stroke="#ffffff" stroke-width="0.7"/>
<circle cx="232.30" cy="340.90" r="2.5" fill="#2f6fb4" stroke="#ffffff" stroke-width="0.7"/>
<circle cx="255.36" cy="358.80" r="2.5" fill="#2f6fb4" stroke="#ffffff" stroke-width="0.7"/>
<circle cx="278.42" cy="360.00" r="2.5" fill="#2f6fb4" stroke="#ffffff" stroke-width="0.7"/>
<circle cx="301.48" cy="360.30" r="2.5" fill="#2f6fb4" stroke="#ffffff" stroke-width="0.7"/>
<circle cx="324.54" cy="360.00" r="2.5" fill="#2f6fb4" stroke="#ffffff" stroke-width="0.7"/>
<circle cx="347.60" cy="360.30" r="2.5" fill="#2f6fb4" stroke="#ffffff" stroke-width="0.7"/>
<circle cx="370.66" cy="343.50" r="2.5" fill="#2f6fb4" stroke="#ffffff" stroke-width="0.7"/>
<circle cx="393.72" cy="345.00" r="2.5" fill="#2f6fb4" stroke="#ffffff" stroke-width="0.7"/>
<circle cx="416.78" cy="359.30" r="2.5" fill="#2f6fb4" stroke="#ffffff" stroke-width="0.7"/>
<circle cx="439.84" cy="360.00" r="2.5" fill="#2f6fb4" stroke="#ffffff" stroke-width="0.7"/>
<circle cx="462.90" cy="360.00" r="2.5" fill="#2f6fb4" stroke="#ffffff" stroke-width="0.7"/>
<circle cx="485.96" cy="360.00" r="2.5" fill="#2f6fb4" stroke="#ffffff" stroke-width="0.7"/>
<circle cx="509.02" cy="360.00" r="2.5" fill="#2f6fb4" stroke="#ffffff" stroke-width="0.7"/>
<circle cx="532.08" cy="344.60" r="2.5" fill="#2f6fb4" stroke="#ffffff" stroke-width="0.7"/>
<circle cx="555.14" cy="343.50" r="2.5" fill="#2f6fb4" stroke="#ffffff" stroke-width="0.7"/>
<circle cx="578.20" cy="358.60" r="2.5" fill="#2f6fb4" stroke="#ffffff" stroke-width="0.7"/>
<circle cx="601.26" cy="359.70" r="2.5" fill="#2f6fb4" stroke="#ffffff" stroke-width="0.7"/>
<circle cx="624.32" cy="360.00" r="2.5" fill="#2f6fb4" stroke="#ffffff" stroke-width="0.7"/>
<circle cx="647.38" cy="359.30" r="2.5" fill="#2f6fb4" stroke="#ffffff" stroke-width="0.7"/>
<circle cx="670.44" cy="360.80" r="2.5" fill="#2f6fb4" stroke="#ffffff" stroke-width="0.7"/>
<circle cx="693.50" cy="345.00" r="2.5" fill="#2f6fb4" stroke="#ffffff" stroke-width="0.7"/>
<circle cx="716.56" cy="345.60" r="2.5" fill="#2f6fb4" stroke="#ffffff" stroke-width="0.7"/>
<circle cx="739.62" cy="357.50" r="2.5" fill="#2f6fb4" stroke="#ffffff" stroke-width="0.7"/>
<circle cx="762.68" cy="379.80" r="2.5" fill="#2f6fb4" stroke="#ffffff" stroke-width="0.7"/>
<circle cx="785.74" cy="393.00" r="2.5" fill="#2f6fb4" stroke="#ffffff" stroke-width="0.7"/>
<polyline points="117.00,390.60 140.06,390.00 163.12,390.80 186.18,387.00 209.24,390.30 232.30,387.00 255.36,390.00 278.42,390.00 301.48,390.00 324.54,390.30 347.60,390.00 370.66,390.30 393.72,387.00 416.78,390.00 439.84,390.30 462.90,389.50 485.96,389.50 509.02,391.50 532.08,390.00 555.14,387.50 578.20,390.00 601.26,387.80 624.32,389.30 647.38,389.70 670.44,385.40 693.50,379.80 716.56,380.40 739.62,379.30 762.68,359.00 785.74,390.60" fill="none" stroke="#e0733a" stroke-width="1.5" stroke-linejoin="round"/>
<circle cx="117.00" cy="390.60" r="2.5" fill="#e0733a" stroke="#ffffff" stroke-width="0.7"/>
<circle cx="140.06" cy="390.00" r="2.5" fill="#e0733a" stroke="#ffffff" stroke-width="0.7"/>
<circle cx="163.12" cy="390.80" r="2.5" fill="#e0733a" stroke="#ffffff" stroke-width="0.7"/>
<circle cx="186.18" cy="387.00" r="2.5" fill="#e0733a" stroke="#ffffff" stroke-width="0.7"/>
<circle cx="209.24" cy="390.30" r="2.5" fill="#e0733a" stroke="#ffffff" stroke-width="0.7"/>
<circle cx="232.30" cy="387.00" r="2.5" fill="#e0733a" stroke="#ffffff" stroke-width="0.7"/>
<circle cx="255.36" cy="390.00" r="2.5" fill="#e0733a" stroke="#ffffff" stroke-width="0.7"/>
<circle cx="278.42" cy="390.00" r="2.5" fill="#e0733a" stroke="#ffffff" stroke-width="0.7"/>
<circle cx="301.48" cy="390.00" r="2.5" fill="#e0733a" stroke="#ffffff" stroke-width="0.7"/>
<circle cx="324.54" cy="390.30" r="2.5" fill="#e0733a" stroke="#ffffff" stroke-width="0.7"/>
<circle cx="347.60" cy="390.00" r="2.5" fill="#e0733a" stroke="#ffffff" stroke-width="0.7"/>
<circle cx="370.66" cy="390.30" r="2.5" fill="#e0733a" stroke="#ffffff" stroke-width="0.7"/>
<circle cx="393.72" cy="387.00" r="2.5" fill="#e0733a" stroke="#ffffff" stroke-width="0.7"/>
<circle cx="416.78" cy="390.00" r="2.5" fill="#e0733a" stroke="#ffffff" stroke-width="0.7"/>
<circle cx="439.84" cy="390.30" r="2.5" fill="#e0733a" stroke="#ffffff" stroke-width="0.7"/>
<circle cx="462.90" cy="389.50" r="2.5" fill="#e0733a" stroke="#ffffff" stroke-width="0.7"/>
<circle cx="485.96" cy="389.50" r="2.5" fill="#e0733a" stroke="#ffffff" stroke-width="0.7"/>
<circle cx="509.02" cy="391.50" r="2.5" fill="#e0733a" stroke="#ffffff" stroke-width="0.7"/>
<circle cx="532.08" cy="390.00" r="2.5" fill="#e0733a" stroke="#ffffff" stroke-width="0.7"/>
<circle cx="555.14" cy="387.50" r="2.5" fill="#e0733a" stroke="#ffffff" stroke-width="0.7"/>
<circle cx="578.20" cy="390.00" r="2.5" fill="#e0733a" stroke="#ffffff" stroke-width="0.7"/>
<circle cx="601.26" cy="387.80" r="2.5" fill="#e0733a" stroke="#ffffff" stroke-width="0.7"/>
<circle cx="624.32" cy="389.30" r="2.5" fill="#e0733a" stroke="#ffffff" stroke-width="0.7"/>
<circle cx="647.38" cy="389.70" r="2.5" fill="#e0733a" stroke="#ffffff" stroke-width="0.7"/>
<circle cx="670.44" cy="385.40" r="2.5" fill="#e0733a" stroke="#ffffff" stroke-width="0.7"/>
<circle cx="693.50" cy="379.80" r="2.5" fill="#e0733a" stroke="#ffffff" stroke-width="0.7"/>
<circle cx="716.56" cy="380.40" r="2.5" fill="#e0733a" stroke="#ffffff" stroke-width="0.7"/>
<circle cx="739.62" cy="379.30" r="2.5" fill="#e0733a" stroke="#ffffff" stroke-width="0.7"/>
<circle cx="762.68" cy="359.00" r="2.5" fill="#e0733a" stroke="#ffffff" stroke-width="0.7"/>
<circle cx="785.74" cy="390.60" r="2.5" fill="#e0733a" stroke="#ffffff" stroke-width="0.7"/>
<text x="117.0" y="407.11" font-size="7.3" fill="#555" font-weight="normal" text-anchor="middle" >Aug 01</text>
<text x="140.1" y="407.11" font-size="7.3" fill="#555" font-weight="normal" text-anchor="middle" >02</text>
<text x="163.1" y="407.11" font-size="7.3" fill="#555" font-weight="normal" text-anchor="middle" >03</text>
<text x="186.2" y="407.11" font-size="7.3" fill="#555" font-weight="normal" text-anchor="middle" >04</text>
<text x="209.2" y="407.11" font-size="7.3" fill="#555" font-weight="normal" text-anchor="middle" >05</text>
<text x="232.3" y="407.11" font-size="7.3" fill="#555" font-weight="normal" text-anchor="middle" >06</text>
<text x="255.4" y="407.11" font-size="7.3" fill="#555" font-weight="normal" text-anchor="middle" >07</text>
<text x="278.4" y="407.11" font-size="7.3" fill="#555" font-weight="normal" text-anchor="middle" >08</text>
<text x="301.5" y="407.11" font-size="7.3" fill="#555" font-weight="normal" text-anchor="middle" >09</text>
<text x="324.5" y="407.11" font-size="7.3" fill="#555" font-weight="normal" text-anchor="middle" >10</text>
<text x="347.6" y="407.11" font-size="7.3" fill="#555" font-weight="normal" text-anchor="middle" >11</text>
<text x="370.7" y="407.11" font-size="7.3" fill="#555" font-weight="normal" text-anchor="middle" >12</text>
<text x="393.7" y="407.11" font-size="7.3" fill="#555" font-weight="normal" text-anchor="middle" >13</text>
<text x="416.8" y="407.11" font-size="7.3" fill="#555" font-weight="normal" text-anchor="middle" >14</text>
<text x="439.8" y="407.11" font-size="7.3" fill="#555" font-weight="normal" text-anchor="middle" >15</text>
<text x="462.9" y="407.11" font-size="7.3" fill="#555" font-weight="normal" text-anchor="middle" >16</text>
<text x="486.0" y="407.11" font-size="7.3" fill="#555" font-weight="normal" text-anchor="middle" >17</text>
<text x="509.0" y="407.11" font-size="7.3" fill="#555" font-weight="normal" text-anchor="middle" >18</text>
<text x="532.1" y="407.11" font-size="7.3" fill="#555" font-weight="normal" text-anchor="middle" >19</text>
<text x="555.1" y="407.11" font-size="7.3" fill="#555" font-weight="normal" text-anchor="middle" >20</text>
<text x="578.2" y="407.11" font-size="7.3" fill="#555" font-weight="normal" text-anchor="middle" >21</text>
<text x="601.3" y="407.11" font-size="7.3" fill="#555" font-weight="normal" text-anchor="middle" >22</text>
<text x="624.3" y="407.11" font-size="7.3" fill="#555" font-weight="normal" text-anchor="middle" >23</text>
<text x="647.4" y="407.11" font-size="7.3" fill="#555" font-weight="normal" text-anchor="middle" >24</text>
<text x="670.4" y="407.11" font-size="7.3" fill="#555" font-weight="normal" text-anchor="middle" >25</text>
<text x="693.5" y="407.11" font-size="7.3" fill="#555" font-weight="normal" text-anchor="middle" >26</text>
<text x="716.6" y="407.11" font-size="7.3" fill="#555" font-weight="normal" text-anchor="middle" >27</text>
<text x="739.6" y="407.11" font-size="7.3" fill="#555" font-weight="normal" text-anchor="middle" >28</text>
<text x="762.7" y="407.11" font-size="7.3" fill="#555" font-weight="normal" text-anchor="middle" >29</text>
<text x="785.7" y="407.11" font-size="7.3" fill="#555" font-weight="normal" text-anchor="middle" >30</text>
<text x="117.0" y="415.41" font-size="7.3" fill="#555" font-weight="normal" text-anchor="middle" >2017</text>
<text x="451.4" y="435.92" font-size="9.0" fill="#3a3a3a" font-weight="bold" text-anchor="middle" textLength="55.0" lengthAdjust="spacingAndGlyphs" >Creation Date</text>
<rect x="865.30" y="326.30" width="8.80" height="8.70" fill="#5899da" />
<line x1="861.00" y1="343.30" x2="866.60" y2="343.30" stroke="#93bfeb" stroke-width="1.3" />
<line x1="873.00" y1="343.30" x2="878.60" y2="343.30" stroke="#93bfeb" stroke-width="1.3" />
<circle cx="869.8" cy="343.3" r="1.9" fill="#93bfeb"/>
<line x1="861.00" y1="356.00" x2="866.60" y2="356.00" stroke="#2f6fb4" stroke-width="1.3" />
<line x1="873.00" y1="356.00" x2="878.60" y2="356.00" stroke="#2f6fb4" stroke-width="1.3" />
<circle cx="869.8" cy="356.0" r="1.9" fill="#2f6fb4"/>
<line x1="861.00" y1="368.60" x2="866.60" y2="368.60" stroke="#e0733a" stroke-width="1.3" />
<line x1="873.00" y1="368.60" x2="878.60" y2="368.60" stroke="#e0733a" stroke-width="1.3" />
<circle cx="869.8" cy="368.6" r="1.9" fill="#e0733a"/>
<text x="881.9" y="333.31" font-size="7.3" fill="#555" font-weight="normal" text-anchor="start" textLength="66.5" lengthAdjust="spacingAndGlyphs" >Written Items (Rater)</text>
<text x="881.9" y="345.91" font-size="7.3" fill="#555" font-weight="normal" text-anchor="start" textLength="61.5" lengthAdjust="spacingAndGlyphs" >Unprocessed Items</text>
<text x="881.9" y="358.61" font-size="7.3" fill="#555" font-weight="normal" text-anchor="start" textLength="54.0" lengthAdjust="spacingAndGlyphs" >Successful Items</text>
<text x="881.9" y="371.21" font-size="7.3" fill="#555" font-weight="normal" text-anchor="start" textLength="80.5" lengthAdjust="spacingAndGlyphs" >Pending Erroneous Items</text>
<text x="70.6" y="460.04" font-size="11.0" fill="#333" font-weight="normal" text-anchor="start" textLength="89.8" lengthAdjust="spacingAndGlyphs" >Item Files (39,234)</text>
<text x="756.4" y="459.28" font-size="8.6" fill="#a9bdd0" font-weight="normal" text-anchor="start" textLength="91.4" lengthAdjust="spacingAndGlyphs" >Display Related Records</text>
<rect x="857.60" y="448.40" width="38.80" height="15.20" fill="#ffffff" rx="1.5" stroke="#b9c7d6" stroke-width="0.7"/>
<path d="M859.1 448.1 H877.2 V463.9 H859.1 A1.7 1.7 0 0 1 857.4 462.2 V449.8 A1.7 1.7 0 0 1 859.1 448.1 Z" fill="#2b5a8c"/>
<g><path d="M862.5 456 Q867.6 450.6 872.7 456 Q867.6 461.4 862.5 456 Z" fill="none" stroke="#ffffff" stroke-width="1.0"/><circle cx="867.6" cy="456" r="1.9" fill="#ffffff"/><circle cx="867.6" cy="456" r="0.7" fill="#2b5a8c" opacity="0.5"/></g>
<g fill="none" stroke="#5f84ad" stroke-width="0.65" stroke-linecap="round"><path d="M882.2 456.2 Q887 451.6 891.8 456.2 Q887 460.8 882.2 456.2 Z"/><circle cx="887" cy="456.2" r="1.5"/><path d="M882.6 451.4 L891.6 460.6" stroke-width="0.8"/></g>
<g fill="none" stroke="#3d6a9c" stroke-width="0.9" stroke-linejoin="round"><path d="M915.90 456.10 L914.80 457.59 L914.52 459.42 L912.69 459.70 L911.20 460.80 L909.71 459.70 L907.88 459.42 L907.60 457.59 L906.50 456.10 L907.60 454.61 L907.88 452.78 L909.71 452.50 L911.20 451.40 L912.69 452.50 L914.52 452.78 L914.80 454.61 Z"/><circle cx="911.2" cy="456.1" r="1.9"/></g>
<g fill="none" stroke="#3d6a9c" stroke-width="0.85" stroke-linejoin="round"><path d="M933.6 459.8 H931.4 V453.4 L933.4 451.4 H938.2 V453.4"/><rect x="934" y="454" width="6.2" height="6.6" rx="0.6" fill="#3d6a9c" opacity="0.9"/></g>
<g stroke="#fff" stroke-width="0.5"><path d="M934.4 456.2 H939.8 M934.4 458.2 H939.8 M936.1 454.4 V460.2 M938.1 454.4 V460.2"/></g>
<g fill="none" stroke="#3d6a9c" stroke-width="0.9" stroke-linecap="round" stroke-linejoin="round"><path d="M960.5999999999999 451.5 H964.4 V455.3 M964.4 451.5 L961.0 454.90000000000003"/><path d="M959.0 460.70000000000005 H955.1999999999999 V456.90000000000003 M955.1999999999999 460.70000000000005 L958.5999999999999 457.3"/><path d="M955.1999999999999 454.5 V451.5 H958.1999999999999" stroke-dasharray="1.4 1.1"/><path d="M964.4 457.70000000000005 V460.70000000000005 H961.4" stroke-dasharray="1.4 1.1"/></g>
<rect x="61.40" y="470.40" width="910.40" height="22.70" fill="#f4f4f4" />
<rect x="61.40" y="493.10" width="910.40" height="100.30" fill="#ffffff" />
<rect x="61.40" y="593.40" width="910.40" height="10.50" fill="#f7f7f7" />
<rect x="961.80" y="470.40" width="10.00" height="133.50" fill="#f7f7f7" />
<line x1="61.40" y1="470.40" x2="971.80" y2="470.40" stroke="#e3e3e3" stroke-width="0.8" />
<line x1="61.40" y1="493.10" x2="961.80" y2="493.10" stroke="#e3e3e3" stroke-width="0.8" />
<line x1="61.40" y1="513.20" x2="961.80" y2="513.20" stroke="#e3e3e3" stroke-width="0.8" />
<line x1="61.40" y1="533.20" x2="961.80" y2="533.20" stroke="#e3e3e3" stroke-width="0.8" />
<line x1="61.40" y1="553.20" x2="961.80" y2="553.20" stroke="#e3e3e3" stroke-width="0.8" />
<line x1="61.40" y1="470.40" x2="971.80" y2="470.40" stroke="#dadada" stroke-width="1" />
<line x1="61.40" y1="572.60" x2="961.80" y2="572.60" stroke="#bfbfbf" stroke-width="1.3" />
<line x1="61.40" y1="593.40" x2="961.80" y2="593.40" stroke="#e3e3e3" stroke-width="0.8" />
<line x1="80.30" y1="470.40" x2="80.30" y2="572.60" stroke="#e1e1e1" stroke-width="0.8" />
<line x1="250.40" y1="470.40" x2="250.40" y2="572.60" stroke="#e1e1e1" stroke-width="0.8" />
<line x1="319.50" y1="470.40" x2="319.50" y2="572.60" stroke="#e1e1e1" stroke-width="0.8" />
<line x1="378.60" y1="470.40" x2="378.60" y2="572.60" stroke="#e1e1e1" stroke-width="0.8" />
<line x1="463.30" y1="470.40" x2="463.30" y2="572.60" stroke="#e1e1e1" stroke-width="0.8" />
<line x1="555.60" y1="470.40" x2="555.60" y2="572.60" stroke="#e1e1e1" stroke-width="0.8" />
<line x1="667.60" y1="470.40" x2="667.60" y2="572.60" stroke="#e1e1e1" stroke-width="0.8" />
<line x1="754.20" y1="470.40" x2="754.20" y2="572.60" stroke="#e1e1e1" stroke-width="0.8" />
<line x1="836.70" y1="470.40" x2="836.70" y2="572.60" stroke="#e1e1e1" stroke-width="0.8" />
<line x1="889.40" y1="470.40" x2="889.40" y2="572.60" stroke="#e1e1e1" stroke-width="0.8" />
<line x1="961.80" y1="470.40" x2="961.80" y2="572.60" stroke="#e1e1e1" stroke-width="0.8" />
<line x1="61.40" y1="470.40" x2="61.40" y2="603.90" stroke="#dcdcdc" stroke-width="0.8" />
<line x1="971.80" y1="470.40" x2="971.80" y2="603.90" stroke="#e1e1e1" stroke-width="0.8" />
<line x1="961.80" y1="572.60" x2="961.80" y2="603.90" stroke="#e1e1e1" stroke-width="0.8" />
<line x1="80.30" y1="593.40" x2="80.30" y2="603.90" stroke="#e1e1e1" stroke-width="0.8" />
<text x="86.5" y="484.21" font-size="8.4" fill="#484848" font-weight="normal" text-anchor="start" textLength="22.2" lengthAdjust="spacingAndGlyphs" >Name</text>
<text x="256.8" y="484.21" font-size="8.4" fill="#484848" font-weight="normal" text-anchor="start" textLength="23.4" lengthAdjust="spacingAndGlyphs" >Status</text>
<text x="325.0" y="484.21" font-size="8.4" fill="#484848" font-weight="normal" text-anchor="start" textLength="44.5" lengthAdjust="spacingAndGlyphs" >Class Name</text>
<text x="384.4" y="484.21" font-size="8.4" fill="#484848" font-weight="normal" text-anchor="start" textLength="32.6" lengthAdjust="spacingAndGlyphs" >Progress</text>
<text x="472.5" y="484.21" font-size="8.4" fill="#484848" font-weight="normal" text-anchor="start" textLength="77.0" lengthAdjust="spacingAndGlyphs" >Written Items (Rater)</text>
<text x="564.2" y="484.21" font-size="8.4" fill="#484848" font-weight="normal" text-anchor="start" textLength="97.8" lengthAdjust="spacingAndGlyphs" >Written Items (Bulkloader)</text>
<text x="677.0" y="484.21" font-size="8.4" fill="#484848" font-weight="normal" text-anchor="start" textLength="71.2" lengthAdjust="spacingAndGlyphs" >Unprocessed Items</text>
<text x="768.0" y="484.21" font-size="8.4" fill="#484848" font-weight="normal" text-anchor="start" textLength="62.6" lengthAdjust="spacingAndGlyphs" >Successful Items</text>
<text x="845.8" y="484.21" font-size="8.4" fill="#484848" font-weight="normal" text-anchor="start" textLength="38.2" lengthAdjust="spacingAndGlyphs" >Lost Items</text>
<text x="898.6" y="484.21" font-size="8.4" fill="#484848" font-weight="normal" text-anchor="start" textLength="60.4" lengthAdjust="spacingAndGlyphs" >Erroneous Items</text>
<text x="86.2" y="506.34" font-size="8.5" fill="#484848" font-weight="normal" text-anchor="start" textLength="125.5" lengthAdjust="spacingAndGlyphs" >PRD_20170830T000104_028940</text>
<text x="256.4" y="506.34" font-size="8.5" fill="#484848" font-weight="normal" text-anchor="start" textLength="29.4" lengthAdjust="spacingAndGlyphs" >Deleted</text>
<text x="324.8" y="506.34" font-size="8.5" fill="#484848" font-weight="normal" text-anchor="start" textLength="17.6" lengthAdjust="spacingAndGlyphs" >BIT1</text>
<rect x="383.90" y="497.85" width="74.60" height="10.90" fill="#ffffff" rx="5.45" stroke="#d2d2d2" stroke-width="0.7"/>
<path d="M389.35 497.85 H448.30 V508.75 H389.35 A5.45 5.45 0 0 1 389.35 497.85 Z" fill="#e78c07"/>
<text x="443.1" y="505.91" font-size="7.0" fill="#ffffff" font-weight="bold" text-anchor="end" textLength="14.0" lengthAdjust="spacingAndGlyphs" >86%</text>
<text x="524.5" y="506.34" font-size="8.5" fill="#484848" font-weight="normal" text-anchor="end" >2,213</text>
<text x="636.5" y="506.34" font-size="8.5" fill="#484848" font-weight="normal" text-anchor="end" >0</text>
<text x="723.1" y="506.34" font-size="8.5" fill="#484848" font-weight="normal" text-anchor="end" >0</text>
<text x="805.7" y="506.34" font-size="8.5" fill="#484848" font-weight="normal" text-anchor="end" >1,866</text>
<text x="856.2" y="506.34" font-size="8.5" fill="#484848" font-weight="normal" text-anchor="middle" >0</text>
<text x="934.0" y="506.34" font-size="8.5" fill="#484848" font-weight="normal" text-anchor="end" >347</text>
<text x="86.2" y="526.34" font-size="8.5" fill="#484848" font-weight="normal" text-anchor="start" textLength="141.8" lengthAdjust="spacingAndGlyphs" >PRD_20170830T000104_028940.001</text>
<text x="256.4" y="526.34" font-size="8.5" fill="#484848" font-weight="normal" text-anchor="start" textLength="39.2" lengthAdjust="spacingAndGlyphs" >Processed</text>
<text x="324.8" y="526.34" font-size="8.5" fill="#484848" font-weight="normal" text-anchor="start" textLength="17.6" lengthAdjust="spacingAndGlyphs" >BIT1</text>
<rect x="383.90" y="517.85" width="74.60" height="10.90" fill="#ffffff" rx="5.45" stroke="#d2d2d2" stroke-width="0.7"/>
<path d="M389.35 517.85 H395.90 V528.75 H389.35 A5.45 5.45 0 0 1 389.35 517.85 Z" fill="#2b7c2b"/>
<text x="400.5" y="525.91" font-size="7.0" fill="#666" font-weight="normal" text-anchor="start" textLength="14.3" lengthAdjust="spacingAndGlyphs" >16%</text>
<text x="524.5" y="526.34" font-size="8.5" fill="#484848" font-weight="normal" text-anchor="end" >0</text>
<text x="636.5" y="526.34" font-size="8.5" fill="#484848" font-weight="normal" text-anchor="end" >347</text>
<text x="723.1" y="526.34" font-size="8.5" fill="#484848" font-weight="normal" text-anchor="end" >289</text>
<text x="805.7" y="526.34" font-size="8.5" fill="#484848" font-weight="normal" text-anchor="end" >58</text>
<text x="856.2" y="526.34" font-size="8.5" fill="#484848" font-weight="normal" text-anchor="middle" >0</text>
<text x="934.0" y="526.34" font-size="8.5" fill="#484848" font-weight="normal" text-anchor="end" >0</text>
<text x="86.2" y="546.34" font-size="8.5" fill="#484848" font-weight="normal" text-anchor="start" textLength="125.5" lengthAdjust="spacingAndGlyphs" >PRD_20170830T000231_028941</text>
<text x="256.4" y="546.34" font-size="8.5" fill="#484848" font-weight="normal" text-anchor="start" textLength="39.2" lengthAdjust="spacingAndGlyphs" >Processed</text>
<text x="324.8" y="546.34" font-size="8.5" fill="#484848" font-weight="normal" text-anchor="start" textLength="17.6" lengthAdjust="spacingAndGlyphs" >BIT2</text>
<rect x="383.90" y="537.85" width="74.60" height="10.90" fill="#ffffff" rx="5.45" stroke="#d2d2d2" stroke-width="0.7"/>
<path d="M389.35 537.85 H449.50 V548.75 H389.35 A5.45 5.45 0 0 1 389.35 537.85 Z" fill="#e78c07"/>
<text x="444.3" y="545.91" font-size="7.0" fill="#ffffff" font-weight="bold" text-anchor="end" textLength="14.0" lengthAdjust="spacingAndGlyphs" >88%</text>
<text x="524.5" y="546.34" font-size="8.5" fill="#484848" font-weight="normal" text-anchor="end" >587</text>
<text x="636.5" y="546.34" font-size="8.5" fill="#484848" font-weight="normal" text-anchor="end" >0</text>
<text x="723.1" y="546.34" font-size="8.5" fill="#484848" font-weight="normal" text-anchor="end" >31</text>
<text x="805.7" y="546.34" font-size="8.5" fill="#484848" font-weight="normal" text-anchor="end" >520</text>
<text x="856.2" y="546.34" font-size="8.5" fill="#484848" font-weight="normal" text-anchor="middle" >0</text>
<text x="934.0" y="546.34" font-size="8.5" fill="#484848" font-weight="normal" text-anchor="end" >36</text>
<text x="86.2" y="566.24" font-size="8.5" fill="#484848" font-weight="normal" text-anchor="start" textLength="141.8" lengthAdjust="spacingAndGlyphs" >PRD_20170830T000231_028941.001</text>
<text x="256.4" y="566.24" font-size="8.5" fill="#484848" font-weight="normal" text-anchor="start" textLength="26.0" lengthAdjust="spacingAndGlyphs" >Writing</text>
<text x="324.8" y="566.24" font-size="8.5" fill="#484848" font-weight="normal" text-anchor="start" textLength="17.6" lengthAdjust="spacingAndGlyphs" >BIT2</text>
<rect x="383.90" y="557.75" width="74.60" height="10.90" fill="#ffffff" rx="5.45" stroke="#d2d2d2" stroke-width="0.7"/>
<text x="389.2" y="565.81" font-size="7.0" fill="#666" font-weight="normal" text-anchor="start" textLength="10.4" lengthAdjust="spacingAndGlyphs" >0%</text>
<text x="524.5" y="566.24" font-size="8.5" fill="#484848" font-weight="normal" text-anchor="end" >0</text>
<text x="636.5" y="566.24" font-size="8.5" fill="#484848" font-weight="normal" text-anchor="end" >36</text>
<text x="723.1" y="566.24" font-size="8.5" fill="#484848" font-weight="normal" text-anchor="end" >36</text>
<text x="805.7" y="566.24" font-size="8.5" fill="#484848" font-weight="normal" text-anchor="end" >0</text>
<text x="856.2" y="566.24" font-size="8.5" fill="#484848" font-weight="normal" text-anchor="middle" >0</text>
<text x="934.0" y="566.24" font-size="8.5" fill="#484848" font-weight="normal" text-anchor="end" >0</text>
<rect x="383.90" y="577.95" width="74.60" height="10.90" fill="#ffffff" rx="5.45" stroke="#d2d2d2" stroke-width="0.7"/>
<path d="M389.35 577.95 H454.20 V588.85 H389.35 A5.45 5.45 0 0 1 389.35 577.95 Z" fill="#e78c07"/>
<text x="449.0" y="586.01" font-size="7.0" fill="#ffffff" font-weight="bold" text-anchor="end" textLength="14.0" lengthAdjust="spacingAndGlyphs" >95%</text>
<text x="525.0" y="586.44" font-size="8.5" fill="#2f2f2f" font-weight="bold" text-anchor="end" textLength="42.6" lengthAdjust="spacingAndGlyphs" >32,043,602</text>
<text x="637.0" y="586.44" font-size="8.5" fill="#2f2f2f" font-weight="bold" text-anchor="end" textLength="37.8" lengthAdjust="spacingAndGlyphs" >4,644,554</text>
<text x="723.7" y="586.44" font-size="8.5" fill="#2f2f2f" font-weight="bold" text-anchor="end" textLength="37.8" lengthAdjust="spacingAndGlyphs" >1,054,305</text>
<text x="806.1" y="586.44" font-size="8.5" fill="#2f2f2f" font-weight="bold" text-anchor="end" textLength="42.4" lengthAdjust="spacingAndGlyphs" >31,330,219</text>
<text x="856.8" y="586.44" font-size="8.5" fill="#2f2f2f" font-weight="bold" text-anchor="middle" >0</text>
<text x="934.5" y="586.44" font-size="8.5" fill="#2f2f2f" font-weight="bold" text-anchor="end" textLength="37.8" lengthAdjust="spacingAndGlyphs" >4,303,632</text>
<rect x="963.40" y="493.70" width="6.60" height="9.60" fill="#a9a9a9" />
<rect x="80.80" y="595.60" width="665.60" height="6.80" fill="#b2b2b2" />
</svg></body></html>
